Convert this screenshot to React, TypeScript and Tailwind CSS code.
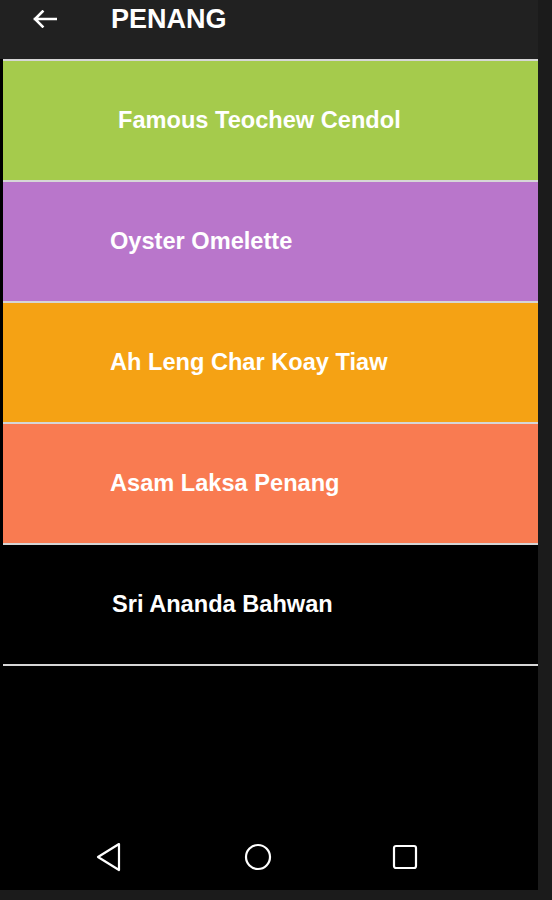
import React from 'react';

interface Place {
  name: string;
  bg: string;
  indent: string;
}

const places: Place[] = [
  { name: 'Famous Teochew Cendol', bg: 'bg-[#a5cb4c]', indent: 'pl-[115px]' },
  { name: 'Oyster Omelette', bg: 'bg-[#b976cb]', indent: 'pl-[107px]' },
  { name: 'Ah Leng Char Koay Tiaw', bg: 'bg-[#f5a214]', indent: 'pl-[107px]' },
  { name: 'Asam Laksa Penang', bg: 'bg-[#f97b51]', indent: 'pl-[107px]' },
  { name: 'Sri Ananda Bahwan', bg: 'bg-black', indent: 'pl-[109px]' },
];

const PlaceRow: React.FC<{ place: Place }> = ({ place }) => (
  <div className="border-t-2 border-[#d6d6d6]">
    <div className={`h-[119px] flex items-center ${place.bg} ${place.indent}`}>
      <span
        className="text-white text-[23.6px] font-bold"
        style={{ fontFamily: '"Liberation Sans", Arial, sans-serif' }}
      >
        {place.name}
      </span>
    </div>
  </div>
);

const App: React.FC = () => {
  return (
    <div className="w-[552px] h-[900px] bg-[#1b1b1b] flex flex-col">
      <div className="w-[538px] h-[890px] bg-black flex flex-col">
        <header className="h-[59px] bg-[#212121] flex items-start pt-[4px] shrink-0">
          <svg width="25" height="18" viewBox="0 0 25 18" className="ml-[32px] mt-[6px]" fill="none">
            <path d="M24 9H3M10.5 1.5L3 9l7.5 7.5" stroke="white" strokeWidth="2.6" strokeLinecap="square" />
          </svg>
          <h1
            className="ml-[54px] text-white text-[27px] font-bold leading-[30px]"
            style={{ fontFamily: '"Liberation Sans", Arial, sans-serif' }}
          >
            PENANG
          </h1>
        </header>

        <div className="pl-[3px] flex flex-col">
          {places.map((p) => (
            <PlaceRow key={p.name} place={p} />
          ))}
          <div className="border-t-2 border-[#d6d6d6]" />
        </div>

        <div className="flex-1" />

        <nav className="h-[64px] flex items-center shrink-0 pb-[2px]">
          <svg width="26" height="30" viewBox="0 0 26 30" className="ml-[96px]" fill="none">
            <path d="M23 2L2 15l21 13z" stroke="white" strokeWidth="2.2" strokeLinejoin="round" />
          </svg>
          <svg width="28" height="28" viewBox="0 0 28 28" className="ml-[122px]" fill="none">
            <circle cx="14" cy="14" r="12" stroke="white" strokeWidth="2.2" />
          </svg>
          <svg width="26" height="26" viewBox="0 0 26 26" className="ml-[120px]" fill="none">
            <rect x="2" y="2" width="22" height="22" rx="2" stroke="white" strokeWidth="2.2" />
          </svg>
        </nav>
      </div>
    </div>
  );
};

export default App;
